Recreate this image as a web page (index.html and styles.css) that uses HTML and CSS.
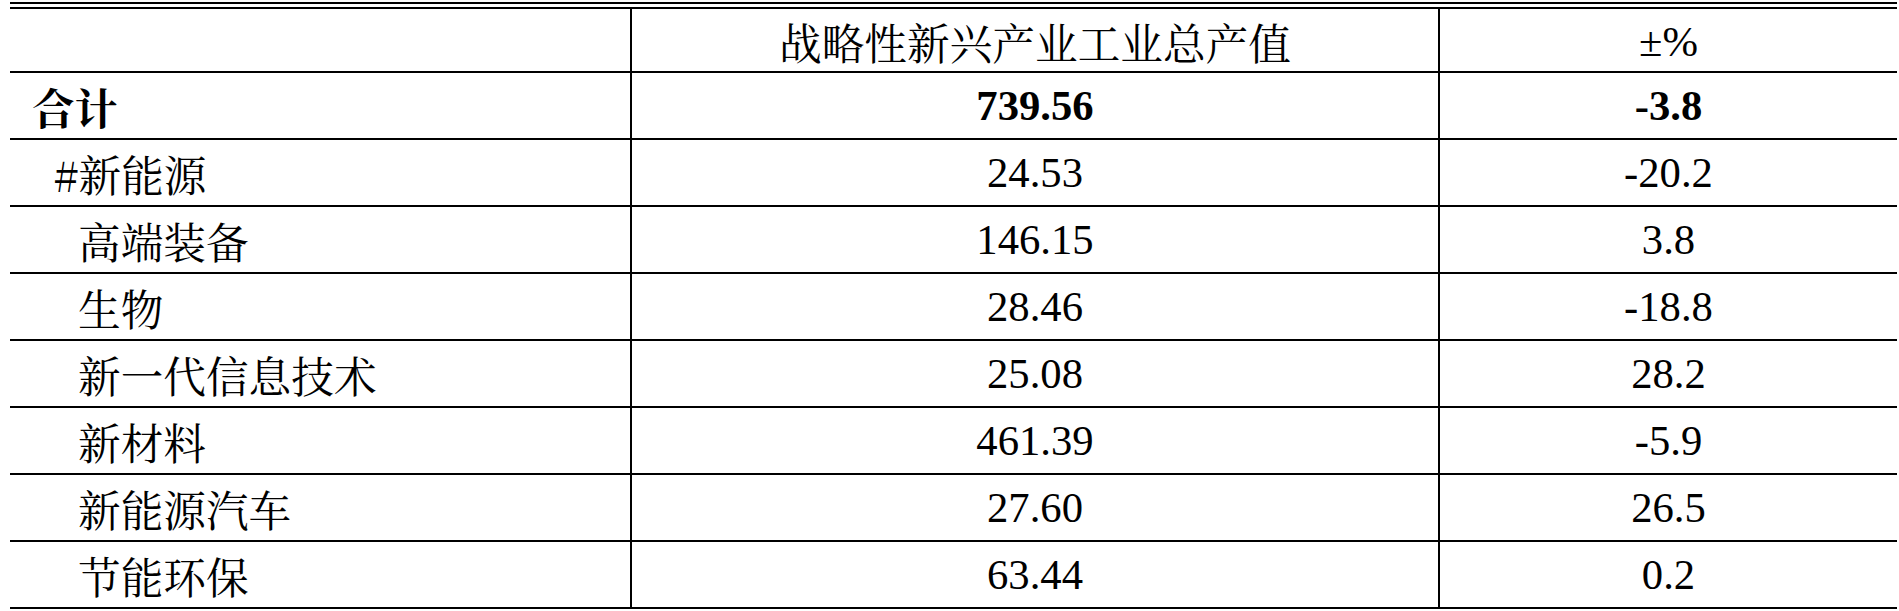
FILE: index.html
```html
<!DOCTYPE html>
<html>
<head>
<meta charset="utf-8">
<title>table</title>
<link rel="stylesheet" href="styles.css">
</head>
<body>
<div class="sheet">
  <div class="grid">
    <div class="cell head name"></div>
    <div class="cell head num cjk">战略性新兴产业工业总产值</div>
    <div class="cell head num latin">±%</div>

    <div class="cell name cjk-b lvl0">合计</div>
    <div class="cell num latin-b">739.56</div>
    <div class="cell num latin-b">-3.8</div>

    <div class="cell name cjk lvl1">#新能源</div>
    <div class="cell num latin">24.53</div>
    <div class="cell num latin">-20.2</div>

    <div class="cell name cjk lvl2">高端装备</div>
    <div class="cell num latin">146.15</div>
    <div class="cell num latin">3.8</div>

    <div class="cell name cjk lvl2">生物</div>
    <div class="cell num latin">28.46</div>
    <div class="cell num latin">-18.8</div>

    <div class="cell name cjk lvl2">新一代信息技术</div>
    <div class="cell num latin">25.08</div>
    <div class="cell num latin">28.2</div>

    <div class="cell name cjk lvl2">新材料</div>
    <div class="cell num latin">461.39</div>
    <div class="cell num latin">-5.9</div>

    <div class="cell name cjk lvl2">新能源汽车</div>
    <div class="cell num latin">27.60</div>
    <div class="cell num latin">26.5</div>

    <div class="cell name cjk lvl2">节能环保</div>
    <div class="cell num latin">63.44</div>
    <div class="cell num latin">0.2</div>
  </div>
</div>
</body>
</html>
```

FILE: styles.css
```css
body {
  margin: 0;
  font-size: 42.67px;
}

.sheet {
  margin: 2px 0 0 10px;
  width: 1887px;
  border-top: 2px solid #000;
  padding-top: 3px;
}

.grid {
  display: grid;
  grid-template-columns: 620px 808px 459px;
  grid-template-rows: 64px repeat(8, 67px);
  border-top: 2px solid #000;
}

.cell {
  box-sizing: border-box;
  border-bottom: 2px solid #000;
  line-height: 65px;
}

.num {
  text-align: center;
  border-left: 2px solid #000;
}

.head {
  line-height: 62px;
}

.head.num {
  padding-top: 4px;
  line-height: 58px;
}

.latin {
  font-family: "Liberation Serif";
}

.latin-b {
  font-family: "Liberation Serif";
  font-weight: bold;
}

.cjk {
  font-family: "Noto Serif CJK SC";
}

.cjk-b {
  font-family: "Noto Serif CJK SC";
  font-weight: bold;
}

.name {
  text-align: left;
  padding-top: 2px;
  line-height: 63px;
}

.lvl0 { padding-left: 22px; }
.lvl1 { padding-left: 44px; }
.lvl2 { padding-left: 68px; }
```
